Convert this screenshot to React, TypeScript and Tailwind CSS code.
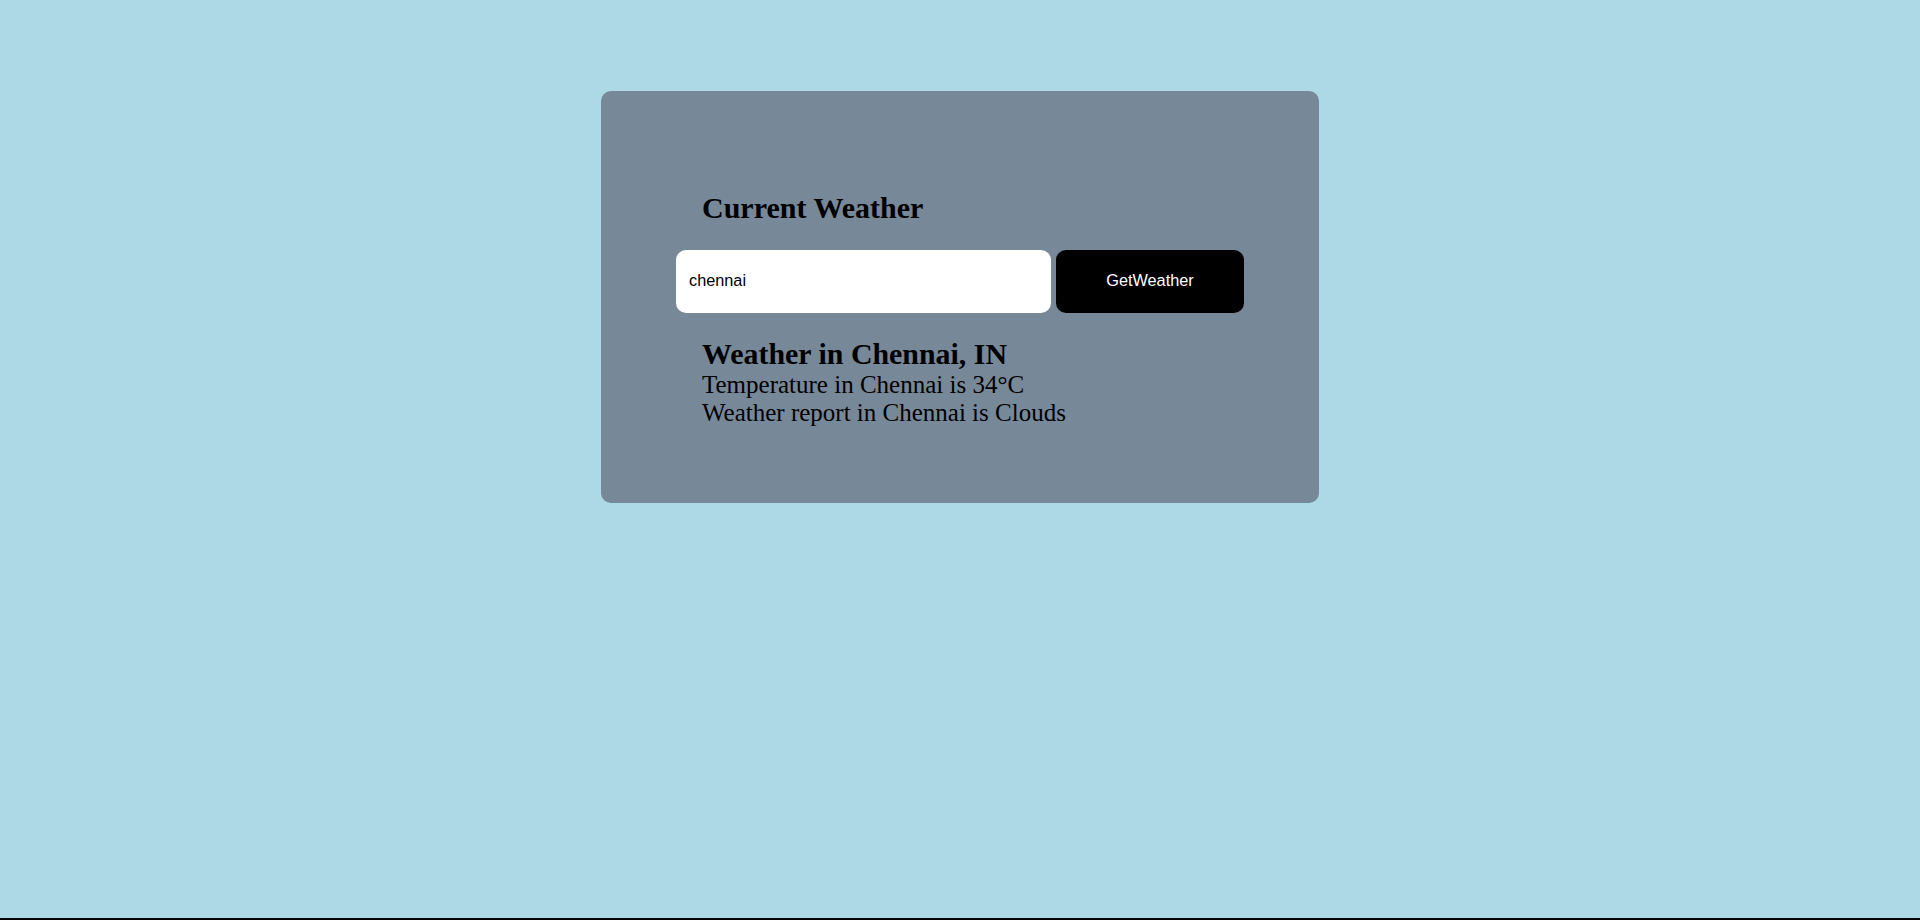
import React, { useState } from "react";

export default function App() {
  const [city, setCity] = useState("chennai");
  return (
    <div className="h-screen w-full bg-[#ADD8E6] border-b-2 border-black box-border overflow-hidden">
      <div className="mx-auto mt-[91px] w-[718px] rounded-[10px] bg-[#778899] px-[75px] pt-[99.5px] pb-[76px] text-black font-['Liberation_Serif','Times_New_Roman',serif]">
        <h2 className="ml-[26px] text-[30px] font-bold leading-[33.8px]">Current Weather</h2>
        <div className="mt-[25.7px] flex gap-[5px]">
          <input
            value={city}
            onChange={(e) => setCity(e.target.value)}
            className="h-[63px] w-[375px] rounded-[10px] border-0 bg-white px-[13px] pb-[2px] text-[16.3px] text-black outline-none font-['Liberation_Sans','Arial',sans-serif]"
          />
          <button className="h-[63px] w-[188px] rounded-[10px] bg-black pb-[2px] text-[16.3px] text-white font-['Liberation_Sans','Arial',sans-serif]">
            GetWeather
          </button>
        </div>
        <div className="ml-[26px] mt-[24px]">
          <h2 className="text-[29.9px] font-bold leading-[33.8px]">Weather in Chennai, IN</h2>
          <p className="text-[25px] leading-[28.1px]">Temperature in Chennai is 34°C</p>
          <p className="text-[25px] leading-[28.1px]">Weather report in Chennai is Clouds</p>
        </div>
      </div>
    </div>
  );
}
